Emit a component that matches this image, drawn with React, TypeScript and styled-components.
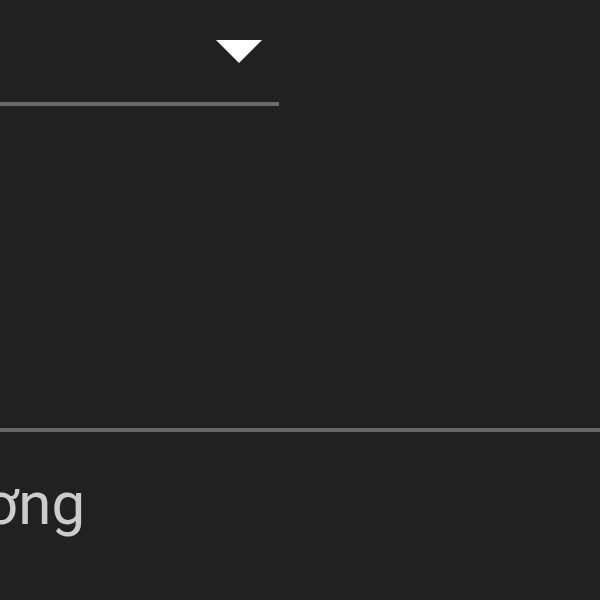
import React from "react";
import styled, { createGlobalStyle } from "styled-components";

const Global = createGlobalStyle`
  html, body { margin: 0; padding: 0; background: #212121; }
  body { width: 600px; height: 600px; overflow: hidden; font-family: Roboto, "Noto Sans", sans-serif; }
`;

const Screen = styled.div`
  width: 600px;
  height: 600px;
  background: #212121;
  display: flex;
  flex-direction: column;
  overflow: hidden;
`;

const Dropdown = styled.div`
  width: 279px;
  height: 106px;
  box-sizing: border-box;
  border-bottom: 4px solid #686868;
  display: flex;
  justify-content: flex-end;
  align-items: flex-start;
  padding: 40px 17px 0 0;
`;

const Arrow = styled.svg`
  display: block;
  width: 46px;
  height: 23px;
`;

const Divider = styled.div`
  margin-top: 322px;
  height: 4px;
  width: 100%;
  background: #686868;
`;

const Label = styled.div`
  margin-top: 42px;
  margin-left: -16px;
  font-size: 60px;
  line-height: 60px;
  color: #cccccc;
  white-space: nowrap;
`;

export default function App() {
  return (
    <>
      <Global />
      <Screen>
        <Dropdown>
          <Arrow viewBox="0 0 46 23">
            <polygon points="0,0 46,0 23,23" fill="#ffffff" />
          </Arrow>
        </Dropdown>
        <Divider />
        <Label>ơng</Label>
      </Screen>
    </>
  );
}
